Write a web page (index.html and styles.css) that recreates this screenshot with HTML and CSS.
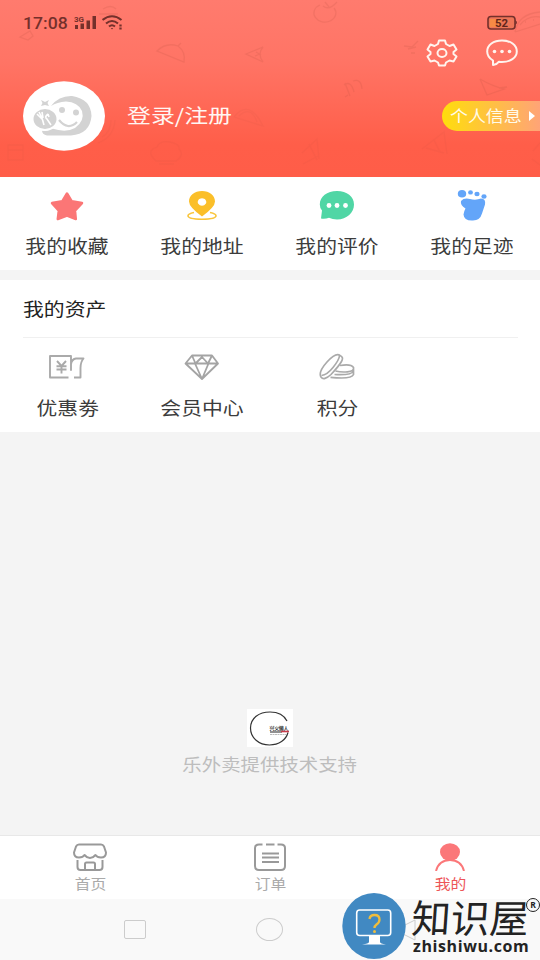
FILE: index.html
```html
<!DOCTYPE html>
<html lang="zh-CN">
<head>
<meta charset="utf-8">
<title>我的</title>
<link rel="stylesheet" href="styles.css">
</head>
<body>
<div class="screen">
  <header class="header">
    <svg class="doodles" viewBox="0 0 540 177" fill="none" stroke="#b9503f" stroke-width="1.3">
      <path d="M157 51Q166 42 178 46Q186 52 184 62ZM178 46l3-3"/>
      <path d="M246 54l17-7q-6 7 0 15zM256 52l5 3M255 56l5-2"/>
      <path d="M20 37l10-6 3 5-5 4zM103 9q8-5 13 0M99 14h19"/>
      <path d="M320 5a11 9 0 1 0 14 3M323 6q6 5 14-4M325 2l4 5"/>
      <path d="M515 32q3-18 25-20M515 32l25-8M520 25q8-10 20-8M525 22h1M533 20h1"/>
      <path d="M404 46l8 1 6-6M408 49l8-2M411 53h4"/>
      <path d="M345 83l5 13M344 85q7-5 10 7M353 81q8-3 9 8M345 97l3-2"/>
      <path d="M480 79l7 16 17-6q-12-3-24-10M499 88l8-1"/>
      <g opacity=".45"><path d="M234 117q15-19 29 9l-29-9M239 116q12-11 18 6M98 143q16-6 17-23M102 137q9-5 9-17M8 145h15v15H8zM8 150h15M156 161q-11-10 1-14 3-7 13-5 10 2 9 7 6 6-3 12zM159 164h15"/><path d="M302 153l15-14 2 20M303 164l15-8M309 144l8 16M422 149l22-17 3 22M426 148l18 5M434 140l6 12M533 151l7-8M532 159l8 6"/></g>
    </svg>
    <div class="statusbar">
      <span class="clock">17:08</span>
      <svg class="signal" viewBox="0 0 24 16" fill="#74302b"><text x="0" y="6.500" class="net" textLength="10" lengthAdjust="spacingAndGlyphs">3G</text><rect x="1" y="10" width="3" height="4"/><rect x="6.500" y="8.500" width="3.500" height="5.500"/><rect x="12.500" y="5.500" width="3.500" height="8.500"/><rect x="18.500" y="1" width="3.500" height="13"/></svg>
      <svg class="wifi" viewBox="0 0 22 16" fill="none" stroke="#74302b" stroke-width="2.100"><path d="M.5 5Q10-2.500 19.500 5M4 8.500q6-5 12 0M7 11.500q3-2.500 6 0"/><path d="M8.800 13h2.400l-1.200 1.500z" fill="#74302b" stroke="none"/><path d="M18.500 9.500v2M18.500 12.500v2" stroke-width="2.300"/></svg>
      <svg class="battery" viewBox="0 0 31 16"><rect x="1" y="1.500" width="27" height="12.500" rx="3" fill="#ed7558" stroke="#74302b" stroke-width="1.600"/><rect x="3" y="4" width="11" height="8" fill="#f68a45"/><path d="M28.500 5.500q2 2 0 4" fill="#74302b" stroke="#74302b"/><text x="8" y="11.500" class="charge" textLength="13" lengthAdjust="spacingAndGlyphs">52</text></svg>
    </div>
    <div class="tools">
      <svg class="gear" viewBox="0 0 32 28" fill="none" stroke="#fff4ee" stroke-width="2" stroke-linejoin="round"><path d="M13 1.500h6l1 3.500 3.500 2 4-1.500 3 5-3 2.500v2l3 2.500-3 5-4-1-3.500 2-1 3h-6l-1-3-3.500-2-4 1-3-5 3-2.500v-2l-3-2.500 3-5 4 1.500 3.500-2z"/><ellipse cx="16" cy="14" rx="4.500" ry="4"/></svg>
      <svg class="chat" viewBox="0 0 32 28" fill="none" stroke="#fff4ee" stroke-width="2" stroke-linejoin="round"><path d="M7 26V21.500Q1.200 18 1.200 12.500C1.200 6 7.500 1.500 16 1.500S30.800 6 30.800 12.500 24 23 16 23q-1.500 0-3-.3Q11 25.500 7 26z"/><g fill="#fff4ee" stroke="none"><circle cx="8.500" cy="12.500" r="1.800"/><circle cx="16" cy="12.500" r="1.800"/><circle cx="23.500" cy="12.500" r="1.800"/></g></svg>
    </div>
    <div class="profile">
      <svg class="avatar" viewBox="0 0 82 70"><ellipse cx="41" cy="35" rx="41" ry="34.700" fill="#fff"/><path d="M28 25Q36 14.500 49 15Q68 18 68.500 35Q67 53 48 54.500H24q-5-1-5-5 5 1 10-2Q43 52 52 47 62 40 59 30 55 21 43 20.500 34 21 28 25z" fill="#d3d3d3"/><ellipse cx="22" cy="38" rx="12.500" ry="11" fill="#d3d3d3" stroke="#fff" stroke-width="2"/><path d="M16 31l3 6 2 7M19 31l1 6M14 33l5 5M25 33q-4 3-1 5l4 6M25 33l1 3" fill="none" stroke="#fff" stroke-width="1.600"/><g fill="#d3d3d3"><circle cx="39" cy="29" r="3"/><circle cx="53" cy="31.500" r="3"/><path d="M18 19l4 2 4-2-1.500 3 1.500 3-4-1-4 1 1.500-3z"/></g><path d="M36 39q9 11 18 2" fill="none" stroke="#d3d3d3" stroke-width="2.200"/></svg>
      <span class="login">登录/注册</span>
      <span class="info"><span class="info-text">个人信息</span><i class="arrow"></i></span>
    </div>
  </header>

  <section class="grid shortcuts">
    <div class="item">
      <svg viewBox="0 0 36 32"><path d="M18 3.500l4.800 7.800 10.200 1.800-7 7.500.8 8.400L18 25.500 8.800 29l1-8.400L3 13.100l10.200-1.800z" fill="#fb7676" stroke="#fb7676" stroke-width="2.500" stroke-linejoin="round"/></svg>
      <span class="label">我的收藏</span>
    </div>
    <div class="item">
      <svg viewBox="0 0 36 32"><path d="M10 22.500c-4 .8-6 2-6 3.300 0 2.200 6 3.400 14 3.400s14-1.200 14-3.400c0-1.300-2-2.500-6-3.300" fill="none" stroke="#f9c53b" stroke-width="1.600"/><path fill-rule="evenodd" d="M18 26.500Q5 17 5 11.500C5 5.500 10.500 1 18 1s13 4.500 13 10.500Q31 17 18 26.500zM18 8.300a4.300 3.700 0 1 0 .01 0z" fill="#fbbf29"/></svg>
      <span class="label">我的地址</span>
    </div>
    <div class="item">
      <svg viewBox="0 0 36 32"><path d="M2 28.500l1-8Q.8 18 .8 14.500C.8 6.500 8 1 18 1s17 5.500 17 13.500S28 29.500 18 29.500q-4.500 0-8-1.700Q6 29.300 2 28.500z" fill="#50d6a5"/><g fill="#fff"><circle cx="10" cy="15.500" r="2.400"/><circle cx="18" cy="15.500" r="2.400"/><circle cx="26.500" cy="15.500" r="2.400"/></g></svg>
      <span class="label">我的评价</span>
    </div>
    <div class="item">
      <svg viewBox="0 0 36 32" fill="#63a5f9"><path d="M7 11q3-3.500 9-2 6 1.500 11-.5 5 0 4 6l-3 9q-2 7-9 7-9 .5-9.500-6 .5-3.500 2-6Q6 15 7 11z"/><ellipse cx="8" cy="3.800" rx="4.200" ry="3.800"/><ellipse cx="16.500" cy="2.400" rx="2.400" ry="2.200"/><ellipse cx="23" cy="4" rx="2.600" ry="2.200"/><ellipse cx="30" cy="6.500" rx="2.600" ry="2.200"/></svg>
      <span class="label">我的足迹</span>
    </div>
  </section>

  <section class="assets">
    <h2 class="title"><span>我的资产</span></h2>
    <div class="grid asset-grid">
      <div class="item">
        <svg viewBox="0 0 36 28" fill="none" stroke="#aaa" stroke-width="1.900" stroke-linejoin="round"><path d="M19.500 24.500H1V3h21v14V11q1-5 5-5.500h7.500Q31.500 9 31.500 15v9.500H25"/><path d="M8 8l4.500 5L17 8M7.500 13.200h10M7.500 16.500h10M12.500 13v7.500"/></svg>
        <span class="label">优惠劵</span>
      </div>
      <div class="item">
        <svg viewBox="0 0 36 28" fill="none" stroke="#a4a4a4" stroke-width="1.800" stroke-linejoin="round"><path d="M8 2.500h20l6 8L18 26 1.500 10.500zM1.500 10.500H34M8 2.500l3.500 8L18 4l6 6.500 4-8M11 10.500L18 26l6.500-15.500"/></svg>
        <span class="label">会员中心</span>
      </div>
      <div class="item">
        <svg viewBox="0 0 36 28" fill="none" stroke="#aaa" stroke-width="1.700"><path d="M2 24Q-1 19 8 9T21 2.500q4 1.500 1.500 6T12 21.500Q5 28 2 24z"/><path d="M2.500 22.500Q8 22 14 14.500T20.500 3"/><path d="M21 12.500q11-2 13.500 2 1 3.500-6 4.300-6 .7-12-.8M34.500 14.500v7q-2 5-23 2.800M34.500 18q-2 4.500-19 3.500"/></svg>
        <span class="label">积分</span>
      </div>
    </div>
  </section>

  <main class="support">
    <svg class="brand" viewBox="0 0 46 38"><rect width="46" height="38" fill="#fff"/><path d="M40 12C37 6 31 3 23 3 12 3 3.500 9 3.500 19S12 36 22.500 36C32 36 39 31 41 23.500" fill="none" stroke="#333" stroke-width="1.200"/><text x="22.500" y="20.500" class="brand-name" textLength="19">兴义懒人</text><path d="M23 23h12" stroke="#555" stroke-width="1.300"/><path d="M34 22.500h8" stroke="#c83c4b" stroke-width="1.600"/><path d="M23 25.500h17" stroke="#aaa" stroke-width=".8" stroke-dasharray="2 .5"/></svg>
    <span class="support-text">乐外卖提供技术支持</span>
  </main>

  <nav class="tabs">
    <div class="tab">
      <svg viewBox="0 0 34 28" fill="none" stroke="#999" stroke-width="2" stroke-linejoin="round"><path d="M6 1.500h22q2 0 3 2l2 6q0 5-5 5-4 0-5.500-2.500Q20 15 17 15t-5.500-3Q10 14.500 6 14.500q-5 0-5-5l2-6q1-2 3-2zM4.500 17v7q0 3 3 3h19q3 0 3-3v-7M12 27v-6q0-1.500 1.500-1.500h7Q22 19.500 22 21v6"/></svg>
      <span>首页</span>
    </div>
    <div class="tab">
      <svg viewBox="0 0 34 28" fill="none" stroke="#999" stroke-width="2"><path d="M9.500 1.500H6q-4 0-4 3.500v18q0 4 4 4h22q4 0 4-4V5q0-3.500-4-3.500h-3.500M13 1.500h8.500M9 10.500h17M9 14.500h17M9 19h17"/></svg>
      <span>订单</span>
    </div>
    <div class="tab active">
      <svg viewBox="0 0 34 28"><ellipse cx="17" cy="9" rx="10" ry="8.700" fill="#fb7779"/><path d="M3 28Q6 17 17 17t14 11" fill="none" stroke="#fb7779" stroke-width="2"/></svg>
      <span>我的</span>
    </div>
  </nav>

  <footer class="sysnav">
    <i class="recent"></i>
    <i class="home"></i>
    <svg class="back" viewBox="0 0 22 24" fill="none" stroke="#ccc"><path d="M21 2v20L1 12z"/></svg>
  </footer>

  <div class="watermark">
    <svg class="monitor" viewBox="0 0 64 66"><ellipse cx="32" cy="33" rx="31.700" ry="33" fill="#4189c2"/><path d="M27 42h11v7q0 1.500 6 2.500H20q7-1 7-2.500z" fill="#fff"/><rect x="14.700" y="17" width="34" height="25.500" rx="3" fill="#4189c2" stroke="#fff" stroke-width="1.600"/><path d="M27.500 26q.5-4 5-4 5 0 5 4.500 0 3-3 5-2 1.500-2 3.500" fill="none" stroke="#efbd3d" stroke-width="2.300"/><circle cx="32.500" cy="38.500" r="1.500" fill="#efbd3d"/></svg>
    <div class="wm-text"><span class="wm-name">知识屋</span><span class="wm-url">zhishiwu.com</span></div>
    <span class="reg">R</span>
  </div>
</div>
</body>
</html>
```
FILE: styles.css
```css
* { box-sizing: border-box; }
body { margin: 0; font-family: "Noto Sans CJK SC", sans-serif; background: #f4f4f4; }
.screen { position: relative; width: 540px; height: 960px; overflow: hidden; display: flex; flex-direction: column; background: #f4f4f4; }
svg { display: block; flex: none; }

.header { position: relative; height: 177px; flex: none; background: linear-gradient(#ff7b6e, #ff7465 35%, #ff5e49 82%, #ff5d48); }
.doodles { position: absolute; left: 0; top: 0; width: 540px; height: 177px; opacity: .17; }
.statusbar { position: relative; height: 39px; padding: 15px 22px 0 23px; display: flex; align-items: flex-start; }
.clock { width: 51px; font: 500 16px/17px Roboto, sans-serif; color: #74302b; transform: scaleX(1.1); transform-origin: left; }
.signal { width: 24px; height: 16px; }
.net { font: bold 7.5px Roboto, sans-serif; }
.wifi { width: 22px; height: 16px; margin-left: 4px; }
.battery { width: 31px; height: 16px; margin-left: auto; }
.charge { font: bold 10px Roboto, sans-serif; fill: #60251c; }
.tools { position: relative; display: flex; justify-content: flex-end; gap: 28px; padding-right: 22px; height: 42px; }
.gear, .chat { width: 32px; height: 28px; }
.profile { position: relative; display: flex; align-items: center; height: 70px; padding-left: 23px; }
.avatar { width: 82px; height: 70px; }
.login { margin: -2px 0 0 22px; font-size: 19.5px; line-height: 28px; color: #fff6f3; transform: scaleX(1.225); transform-origin: left; }
.info { margin-left: auto; display: flex; align-items: center; width: 98px; height: 30px; padding-left: 8px; border-radius: 16px 0 0 16px; background: linear-gradient(90deg, #ffdd0c, #ffa477); }
.info-text { width: 79px; margin-top: -3px; font-size: 16px; line-height: 24px; color: #fffbe9; white-space: nowrap; transform: scaleX(1.12); transform-origin: left; }
.arrow { border: solid transparent; border-width: 5px 0 5px 6px; border-left-color: #fff; }

.grid { display: grid; grid-template-columns: repeat(4, 135px); }
.item { display: flex; flex-direction: column; align-items: center; }
.item svg { width: 36px; height: 32px; margin-left: -1px; }
.label { font-size: 18.5px; line-height: 28px; color: #3c3c3c; transform: scaleX(1.125); }
.shortcuts { height: 93px; padding-top: 13px; background: #fff; }
.shortcuts .label { margin-top: 9px; }
.assets { height: 152px; margin-top: 10px; background: #fff; }
.title { height: 58px; margin: 0 22px 0 23px; border-bottom: 1px solid #f0f0f0; font-size: 18.5px; font-weight: 400; line-height: 57px; color: #222; }
.title span { display: inline-block; transform: scaleX(1.125); transform-origin: left; }
.asset-grid { padding-top: 15px; }
.asset-grid .item svg { height: 28px; margin-left: -2px; }
.asset-grid .label { margin-top: 12px; }

.support { flex: 1; display: flex; flex-direction: column; align-items: center; justify-content: flex-end; padding-bottom: 58px; }
.brand { width: 46px; height: 38px; }
.brand-name { font: bold 5px "Noto Sans CJK SC", sans-serif; fill: #333; }
.support-text { margin-top: 4px; font-size: 16.6px; line-height: 26px; color: #bdbdbd; transform: scaleX(1.17); }

.tabs { height: 64px; flex: none; display: grid; grid-template-columns: repeat(3, 1fr); border-top: 1px solid #e8e8e8; background: #fff; }
.tab { display: flex; flex-direction: column; align-items: center; padding-top: 7px; font-size: 13.5px; line-height: 18px; color: #aaa; }
.tab svg { width: 34px; height: 28px; }
.tab span { margin-top: 3px; transform: scaleX(1.17); }
.tab.active { color: #ed5558; }
.sysnav { height: 61px; flex: none; display: flex; align-items: center; padding-left: 124px; background: #f9f9f9; }
.recent { width: 22px; height: 19px; border: 1px solid #ccc; border-radius: 2px; }
.home { width: 27px; height: 23px; margin-left: 110px; border: 1px solid #ccc; border-radius: 50%; }
.back { width: 22px; height: 24px; margin-left: 111px; }

.watermark { position: absolute; left: 342px; top: 893px; width: 198px; height: 67px; display: flex; color: #232323; }
.monitor { width: 64px; height: 66px; }
.wm-text { display: flex; flex-direction: column; margin-left: 6px; }
.wm-name { font-size: 39px; line-height: 40px; height: 42px; padding-top: 3px; white-space: nowrap; transform: skewX(-4deg); }
.wm-url { margin-left: 1px; height: 19px; font: bold 16px/22px "Open Sans", sans-serif; letter-spacing: .6px; }
.reg { position: absolute; left: 184px; top: 5px; width: 14px; height: 14px; border: 1.5px solid #232323; border-radius: 50%; font: bold 8.5px/11px "Open Sans", sans-serif; text-align: center; }
```
